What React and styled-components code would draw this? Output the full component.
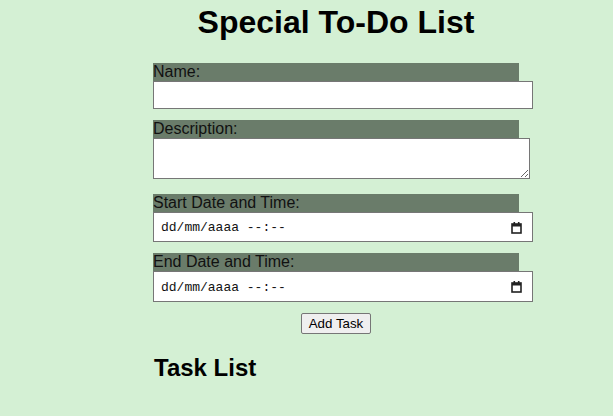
import React from "react";
import styled, { createGlobalStyle } from "styled-components";

const Global = createGlobalStyle`
  html, body { margin: 0; padding: 0; background: #d4f0d4; }
  body { font-family: "Liberation Sans", Arial, sans-serif; color: #000; }
`;

const Page = styled.div`
  display: flex;
  justify-content: center;
  padding: 4px 0 0 59px;
  min-height: 412px;
`;

const Container = styled.div`
  width: 366px;
  display: flex;
  flex-direction: column;
`;

const Title = styled.h1`
  margin: 0 0 22px;
  font-size: 32px;
  line-height: 37px;
  font-weight: bold;
  text-align: center;
`;

const Form = styled.form`
  display: flex;
  flex-direction: column;
`;

const Group = styled.div`
  display: flex;
  flex-direction: column;
  align-items: flex-start;
  margin-bottom: 11px;
`;

const Label = styled.label`
  display: block;
  align-self: stretch;
  background: #6a7c6a;
  font-size: 16px;
  line-height: 18px;
  color: #111;
`;

const TextInput = styled.input`
  box-sizing: border-box;
  width: calc(100% + 14px);
  height: 28px;
  margin: 0;
  padding: 5px 6px;
  border: 1px solid #767676;
  background: #fff;
  font: 13px "Liberation Sans", Arial, sans-serif;
`;

const TextArea = styled.textarea`
  box-sizing: border-box;
  display: block;
  width: calc(100% + 11px);
  height: 41px;
  margin: 0 0 4px;
  padding: 4px;
  border: 1px solid #767676;
  background: #fff;
  font: 13px "Liberation Sans", Arial, sans-serif;
`;

const DateBox = styled.div`
  box-sizing: border-box;
  width: calc(100% + 14px);
  height: ${(p) => p.$h}px;
  display: flex;
  align-items: center;
  justify-content: space-between;
  padding: 0 10px 0 7px;
  border: 1px solid #767676;
  background: #fff;
  font-family: "Liberation Mono", "Courier New", monospace;
  font-size: 13px;
  color: #111;
`;

const DateText = styled.span`
  white-space: pre;
  padding-top: 1px;
`;

const ButtonRow = styled.div`
  display: flex;
  justify-content: center;
`;

const Button = styled.button`
  box-sizing: border-box;
  width: 70px;
  height: 21px;
  padding: 1px 6px;
  border: 1px solid #767676;
  border-radius: 2px;
  background: #efefef;
  font: 13.33px "Liberation Sans", Arial, sans-serif;
  color: #000;
`;

const SubTitle = styled.h2`
  margin: 20px 0 0 1px;
  font-size: 24px;
  line-height: 28px;
  font-weight: bold;
`;

const CalendarIcon = () => (
  <svg width="11" height="13" viewBox="0 0 11 13" aria-hidden="true">
    <rect x="1" y="3" width="9" height="9" fill="none" stroke="#222" strokeWidth="1.6" />
    <rect x="1" y="3" width="9" height="2.5" fill="#222" />
    <rect x="2.5" y="1" width="1.6" height="2.5" fill="#222" />
    <rect x="6.9" y="1" width="1.6" height="2.5" fill="#222" />
  </svg>
);

const DateField = ({ h }) => (
  <DateBox $h={h}>
    <DateText>dd/mm/aaaa --:--</DateText>
    <CalendarIcon />
  </DateBox>
);

export default function App() {
  return (
    <>
      <Global />
      <Page>
        <Container>
          <Title>Special To-Do List</Title>
          <Form onSubmit={(e) => e.preventDefault()}>
            <Group>
              <Label htmlFor="name">Name:</Label>
              <TextInput id="name" type="text" />
            </Group>
            <Group>
              <Label htmlFor="desc">Description:</Label>
              <TextArea id="desc" />
            </Group>
            <Group>
              <Label>Start Date and Time:</Label>
              <DateField h={30} />
            </Group>
            <Group>
              <Label>End Date and Time:</Label>
              <DateField h={31} />
            </Group>
            <ButtonRow>
              <Button type="submit">Add Task</Button>
            </ButtonRow>
          </Form>
          <SubTitle>Task List</SubTitle>
        </Container>
      </Page>
    </>
  );
}
